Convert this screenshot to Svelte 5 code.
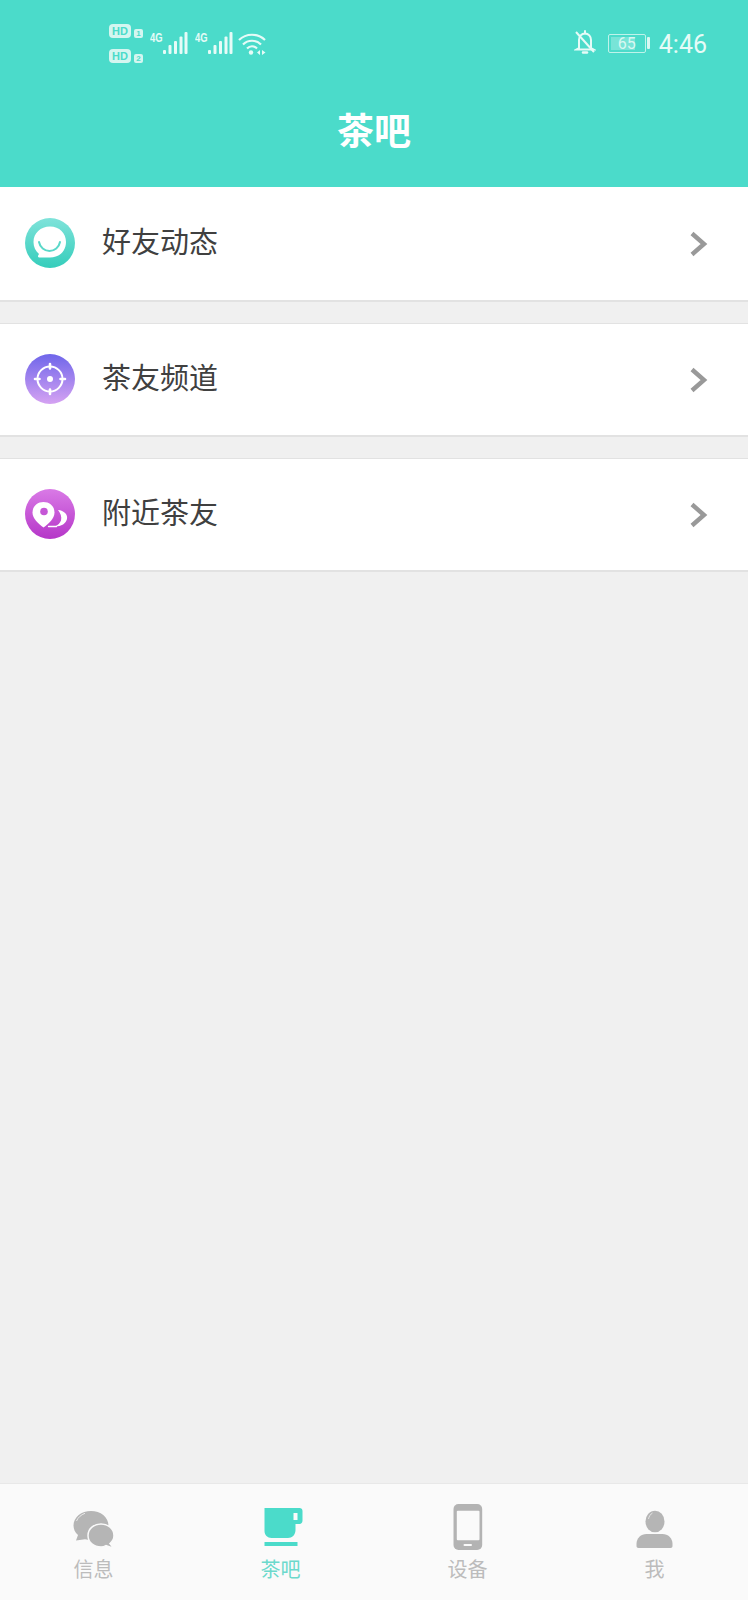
<script>
  const rows = [
    { label: '好友动态', kind: 'chat' },
    { label: '茶友频道', kind: 'target' },
    { label: '附近茶友', kind: 'pin' }
  ];
</script>

<div class="page">
  <header class="header">
    <div class="status">
      <div class="status-left">
        <div class="hd-stack">
          <div class="hd-line"><span class="hd">HD</span><span class="sim">1</span></div>
          <div class="hd-line"><span class="hd">HD</span><span class="sim">2</span></div>
        </div>
        <div class="signal">
          <span class="net">4G</span>
          <svg width="25" height="24" viewBox="0 0 25 24"><g fill="#e6fbf7"><rect x="0" y="19" width="3" height="4" rx="1"/><rect x="5.5" y="14" width="3" height="9" rx="1"/><rect x="11" y="10" width="3" height="13" rx="1"/><rect x="16.5" y="5.5" width="3" height="17.5" rx="1"/><rect x="21.5" y="1" width="3" height="22" rx="1"/></g></svg>
        </div>
        <div class="signal">
          <span class="net">4G</span>
          <svg width="25" height="24" viewBox="0 0 25 24"><g fill="#e6fbf7"><rect x="0" y="19" width="3" height="4" rx="1"/><rect x="5.5" y="14" width="3" height="9" rx="1"/><rect x="11" y="10" width="3" height="13" rx="1"/><rect x="16.5" y="5.5" width="3" height="17.5" rx="1"/><rect x="21.5" y="1" width="3" height="22" rx="1"/></g></svg>
        </div>
        <svg class="wifi" width="30" height="24" viewBox="0 0 30 24" fill="none" stroke="#e6fbf7" stroke-width="2.2"><path d="M1 8C8 1 20 1 27 8"/><path d="M5 12.500C10 7.500 18 7.500 23 12.500"/><path d="M9 16.500C12 13.500 16 13.500 19 16.500"/><circle cx="13" cy="20.500" r="2.2" fill="#e6fbf7" stroke="none"/><path d="M22 18l-3 2.500 3 2.500zM24 18l3.500 2.500L24 23z" fill="#e6fbf7" stroke="none"/></svg>
      </div>
      <div class="status-right">
        <svg class="bell" width="22" height="24" viewBox="0 0 22 24" fill="none" stroke="#e6fbf7" stroke-width="2"><path d="M5 18V10C5 6.500 7.500 3.500 11 3.500S17 6.500 17 10v8l2.500 1.500H2.500z"/><path d="M11 1v2.500" stroke-linecap="round"/><path d="M9 22.500h4" stroke-width="2.5" stroke-linecap="round"/><path d="M2 2l18 20" stroke-width="2"/></svg>
        <div class="battery">
          <div class="cell"><span class="fill"></span><span class="pct">65</span></div>
          <span class="tip"></span>
        </div>
        <span class="time">4:46</span>
      </div>
    </div>
    <h1 class="title">茶吧</h1>
  </header>

  <main class="list">
    {#each rows as row}
      <div class="row">
        {#if row.kind === 'chat'}
          <svg class="icon" viewBox="0 0 50 50">
            <defs><linearGradient id="g1" x1="0" y1="0" x2="0" y2="1"><stop offset="0" stop-color="#7fe3da"/><stop offset="1" stop-color="#35cdbb"/></linearGradient></defs>
            <circle cx="25" cy="25" r="25" fill="url(#g1)"/>
            <path d="M25 8.500C34.500 8.500 41 15 41 24S34.500 39.500 25 39.500H14.500C13 39.500 12.600 38.300 13.300 37.300L14 36C10.500 33 8.500 29 8.500 24 8.500 15 15.500 8.500 25 8.500z" fill="#fff"/>
            <path d="M14 24C15 29.500 19.500 33 24.500 33S34 29.500 35 24" fill="none" stroke="#5ad8c9" stroke-width="2" stroke-linecap="round"/>
          </svg>
        {:else if row.kind === 'target'}
          <svg class="icon" viewBox="0 0 50 50">
            <defs><linearGradient id="g2" x1="0" y1="0" x2="0" y2="1"><stop offset="0" stop-color="#6f66ea"/><stop offset="1" stop-color="#d5a2f2"/></linearGradient></defs>
            <circle cx="25" cy="25" r="25" fill="url(#g2)"/>
            <circle cx="25" cy="25" r="12.5" fill="none" stroke="#fff" stroke-width="2"/>
            <circle cx="25" cy="25" r="3" fill="#fff"/>
            <path d="M25 10v4.500M25 35.500V40M10 25h4.500M35.500 25H40" stroke="#fff" stroke-width="2.6" stroke-linecap="round"/>
          </svg>
        {:else}
          <svg class="icon" viewBox="0 0 50 50">
            <defs><linearGradient id="g3" x1="0" y1="0" x2="0" y2="1"><stop offset="0" stop-color="#d97ae6"/><stop offset="1" stop-color="#b536c8"/></linearGradient></defs>
            <circle cx="25" cy="25" r="25" fill="url(#g3)"/>
            <path d="M18.500 13C25 13 29.500 17.500 29.500 23.500 29.500 29.500 24 34.500 18.500 38.500 13 34.500 7.500 29.500 7.500 23.500 7.500 17.500 12 13 18.500 13z" fill="#fff"/>
            <circle cx="19" cy="22.500" r="3.800" fill="#c557d6"/>
            <path d="M33 21C39 21.500 43 25.500 42 30 41 34.500 36.500 37.500 30 37.500 33 36 35 34 36 31.500 37 28 35.500 24 33 21z" fill="#fff"/>
            <path d="M23.500 37.500h8" stroke="#fff" stroke-width="1.400" stroke-linecap="round"/>
          </svg>
        {/if}
        <span class="label">{row.label}</span>
        <svg class="chev" width="18" height="26" viewBox="0 0 18 26" fill="none"><path d="M2 2.500L14 13 2 23.500" stroke="#999" stroke-width="4.400"/></svg>
      </div>
    {/each}
  </main>

  <nav class="tabs">
    <div class="tab">
      <svg class="tab-icon" viewBox="0 -3 44 50">
        <path d="M19 4C28.500 4 36.500 10 36.500 18.500 36.500 27 28.500 33 19 33 17 33 15 32.700 13 32.200L4 33.500 6 28C3 25.500 1.500 22 1.500 18.500 1.500 10 9.500 4 19 4z" fill="#b5b5b5"/>
        <path d="M4.500 14C6 10.500 9 7.800 13 6.300" stroke="#eee" stroke-width="0.9" fill="none"/>
        <path d="M29 17C36 17 42 21.500 42 28.500 42 32 40.500 34.500 38 36.500L42 41.500 34 38.500C32.500 39.500 31 40 29 40 22 40 16 35.500 16 28.500 16 21.500 22 17 29 17z" fill="#b5b5b5" stroke="#fafafa" stroke-width="1.5"/>
      </svg>
      <span class="tab-label">信息</span>
    </div>
    <div class="tab active">
      <svg class="tab-icon" viewBox="0 -3 44 50">
        <path fill-rule="evenodd" d="M5.500 1H40.500C42.300 1 43.500 2.200 43.500 4V13.500C43.500 15.500 42.300 17 40.500 17H36.500V23C36.500 28 33 31 29 31H12.500C8.500 31 5.500 28 5.500 24zM34.500 6V13H38.500V6z" fill="#4bdbca"/>
        <rect x="5.500" y="35" width="33" height="4" fill="#4bdbca"/>
      </svg>
      <span class="tab-label">茶吧</span>
    </div>
    <div class="tab">
      <svg class="tab-icon" viewBox="0 0 44 50">
        <rect x="7.500" y="0" width="28.700" height="46" rx="5" fill="#b3b3b3"/>
        <rect x="10.800" y="6.700" width="22.700" height="29.500" rx="1" fill="#fafafa"/>
        <rect x="17.500" y="40" width="8.500" height="2" rx="1" fill="#fafafa"/>
      </svg>
      <span class="tab-label">设备</span>
    </div>
    <div class="tab">
      <svg class="tab-icon" viewBox="0 -3 44 50">
        <ellipse cx="22" cy="14.500" rx="9.500" ry="10.800" fill="#b5b5b5"/>
        <path d="M15.500 12C16 9.500 17.500 7 19.500 6" stroke="#eee" stroke-width="0.8" fill="none"/>
        <path d="M3.500 39V37C3.500 31 8 27 13.500 27H29.500C35 27 39.500 31 39.500 37V39C39.500 40.300 38.800 41 37.500 41H5.500C4.200 41 3.500 40.300 3.500 39z" fill="#b5b5b5"/>
      </svg>
      <span class="tab-label">我</span>
    </div>
  </nav>
</div>

<style>
  :global(body) {
    margin: 0;
    background: #f0f0f0;
    font-family: "Noto Sans CJK SC", "Noto Sans", sans-serif;
  }
  .page {
    width: 748px;
    height: 1600px;
    display: flex;
    flex-direction: column;
    background: #f0f0f0;
  }
  .header {
    height: 187px;
    flex: none;
    background: #4bdbca;
    box-sizing: border-box;
    display: flex;
    flex-direction: column;
  }
  .status {
    height: 87px;
    flex: none;
    box-sizing: border-box;
    padding: 23px 41px 0 109px;
    display: flex;
    justify-content: space-between;
    color: #e6fbf7;
  }
  .status-left {
    display: flex;
    align-items: flex-start;
    height: 46px;
  }
  .hd-stack {
    display: flex;
    flex-direction: column;
    gap: 10px;
    width: 41px;
  }
  .hd-line {
    display: flex;
    align-items: center;
    gap: 3px;
    height: 15px;
  }
  .hd {
    background: #d4f6f0;
    color: #4bdbca;
    width: 22px;
    height: 14px;
    border-radius: 4px;
    font: 700 11px/14px "Liberation Sans", sans-serif;
    text-align: center;
  }
  .sim {
    background: #d4f6f0;
    color: #4bdbca;
    width: 9px;
    height: 9px;
    border-radius: 2px;
    font: 700 8px/9px "Liberation Sans", sans-serif;
    text-align: center;
    margin-top: 5px;
  }
  .signal {
    display: flex;
    align-items: flex-start;
    width: 45px;
    margin-top: 9px;
  }
  .net {
    font: 700 12px/12px "Liberation Sans", sans-serif;
    width: 13px;
    flex: none;
    transform: scaleX(0.78);
    transform-origin: left center;
  }
  .signal svg {
    margin-top: -1px;
    flex: none;
  }
  .wifi {
    margin-top: 9px;
    margin-left: -2px;
  }
  .status-right {
    display: flex;
    align-items: center;
    height: 42px;
    margin-top: -1px;
  }
  .bell {
    margin-right: 12px;
    margin-top: -2px;
  }
  .battery {
    display: flex;
    align-items: center;
    gap: 1px;
    margin-right: 9px;
  }
  .cell {
    position: relative;
    width: 38px;
    height: 19px;
    border: 1px solid #bff3ea;
    border-radius: 2px;
    box-sizing: border-box;
  }
  .fill {
    position: absolute;
    left: 2px;
    top: 2px;
    bottom: 2px;
    width: 24px;
    background: rgba(255, 255, 255, 0.25);
  }
  .pct {
    position: absolute;
    inset: 0;
    text-align: center;
    font: 16px/17px "Roboto", sans-serif;
    color: #d9f8f2;
  }
  .tip {
    width: 3px;
    height: 12px;
    background: #d9f8f2;
    border-radius: 1px;
  }
  .time {
    font: 25px/30px "Roboto", sans-serif;
    color: #e6fbf7;
    margin-top: 4px;
  }
  .title {
    margin: 17px 0 0;
    text-align: center;
    color: #fff;
    font-size: 37px;
    font-weight: 700;
    line-height: 50px;
  }
  .list {
    flex: 1;
  }
  .row {
    height: 114px;
    box-sizing: border-box;
    background: #fff;
    border-top: 1px solid #e2e2e2;
    border-bottom: 2px solid #e2e2e2;
    margin-bottom: 21px;
    display: flex;
    align-items: center;
    padding: 0 40px 0 25px;
  }
  .row:first-child {
    border-top: none;
    height: 115px;
  }
  .icon {
    width: 50px;
    height: 50px;
    flex: none;
    margin-top: -1px;
  }
  .label {
    margin-left: 27px;
    flex: 1;
    font-size: 29px;
    line-height: 40px;
    color: #404040;
    margin-top: -7px;
  }
  .chev {
    flex: none;
  }
  .tabs {
    flex: none;
    height: 117px;
    box-sizing: border-box;
    background: #fafafa;
    border-top: 1px solid #e8e8e8;
    display: grid;
    grid-template-columns: repeat(4, 1fr);
  }
  .tab {
    position: relative;
    display: flex;
    flex-direction: column;
    align-items: center;
    height: 100%;
  }
  .tab-icon {
    margin-top: 20px;
    width: 44px;
    height: 50px;
    flex: none;
  }
  .tab-label {
    position: absolute;
    top: 73px;
    font-size: 20px;
    line-height: 24px;
    color: #bcbcbc;
  }
  .active .tab-label {
    color: #6cd9cc;
  }
</style>
